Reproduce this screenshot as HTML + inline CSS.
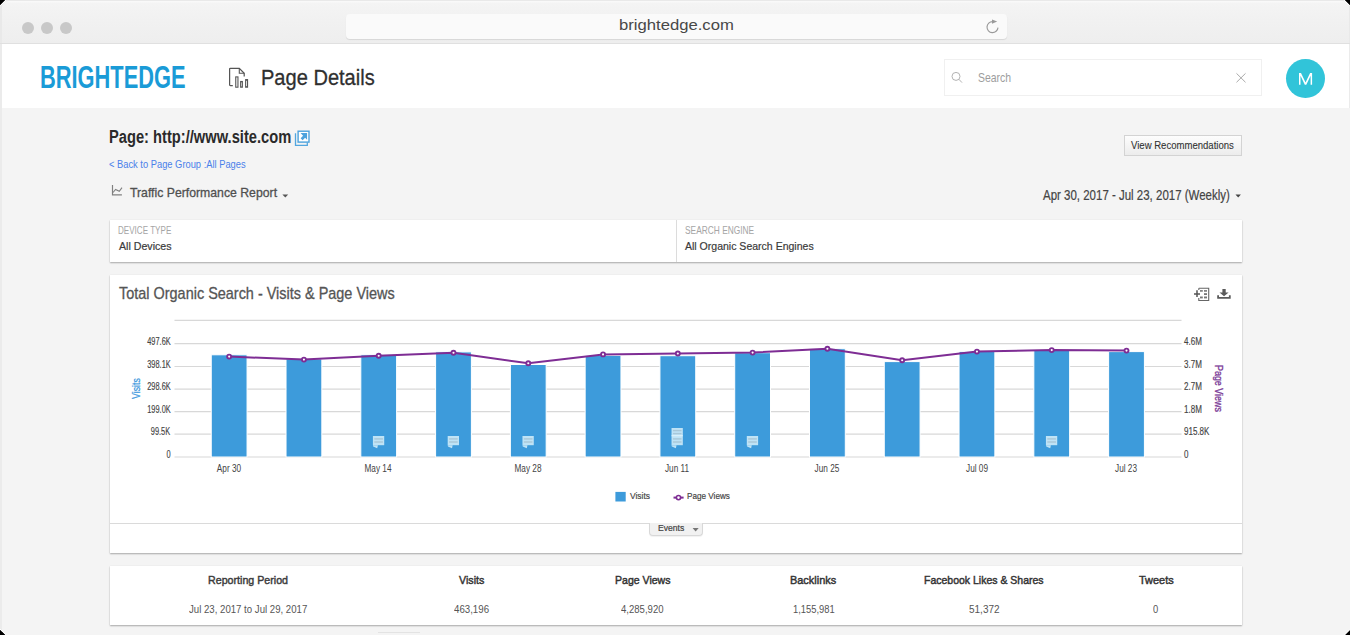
<!DOCTYPE html>
<html><head><meta charset="utf-8"><style>
html,body{margin:0;padding:0;width:1350px;height:635px;overflow:hidden;background:#000}
#win{position:absolute;left:0;top:0;width:1350px;height:635px;overflow:hidden;background:#f4f4f4;clip-path:polygon(5.5px 0,1344.5px 0,1350px 5.5px,1350px 630px,1345px 635px,5.5px 635px,0 629.5px,0 5.5px)}
.t{position:absolute;white-space:nowrap;font-family:"Liberation Sans",sans-serif;line-height:1;transform-origin:0 0}
.a{position:absolute}
</style></head><body><div id="win">
<div class="a" style="left:0;top:0;width:1350px;height:44px;background:#e9e9e9"></div><div class="a" style="left:1.5px;top:1px;width:1347px;height:43px;border-radius:6px 6px 0 0;background:linear-gradient(#fafafa 0,#f4f4f4 2.5px,#f1f1f1 20px,#eeeeee 42px)"></div>
<div class="a" style="left:0;top:42.5px;width:1350px;height:1.5px;background:#e0e0e0"></div>
<div class="a" style="left:21.8px;top:21.8px;width:12.2px;height:12.2px;border-radius:50%;background:#c8c8c8"></div>
<div class="a" style="left:41px;top:21.8px;width:12.2px;height:12.2px;border-radius:50%;background:#c8c8c8"></div>
<div class="a" style="left:60.2px;top:21.8px;width:12.2px;height:12.2px;border-radius:50%;background:#c8c8c8"></div>
<div class="a" style="left:345.5px;top:13.5px;width:661px;height:25px;border-radius:4px;background:#fafafa;box-shadow:0 1px 1px rgba(0,0,0,.10)"></div>
<svg class="a" style="left:984px;top:18px" width="18" height="18" viewBox="0 0 18 18"><path d="M8.6 3.6 A5.5 5.5 0 1 0 14 9.6" fill="none" stroke="#9a9a9a" stroke-width="1.15"/><path d="M8 1.4 L13.2 3.6 L8 5.8 Z" fill="#9a9a9a"/></svg>
<div class="a" style="left:0;top:44px;width:1350px;height:64px;background:#fff"></div>
<div class="a" style="left:0;top:44px;width:1.5px;height:591px;background:#ebebeb"></div>
<div class="a" style="left:1348.5px;top:44px;width:1.5px;height:64px;background:#ebebeb"></div>
<svg class="a" style="left:220px;top:60px" width="40" height="35" viewBox="0 0 40 35"><path d="M12.8 25.6 H10.4 Q9.6 25.6 9.6 24.8 V9 Q9.6 8.3 10.4 8.3 H19.3 L24.2 13.2 V16.5" fill="none" stroke="#555" stroke-width="1.25"/><path d="M19.3 8.3 V13.2 H24.2" fill="none" stroke="#555" stroke-width="1.1"/><rect x="15.75" y="16.9" width="2.2" height="10.3" fill="none" stroke="#555" stroke-width="1.1"/><rect x="20.65" y="21.5" width="1.7" height="5.7" fill="none" stroke="#555" stroke-width="1.1"/><rect x="25.65" y="19.6" width="1.9" height="7.6" fill="none" stroke="#555" stroke-width="1.1"/></svg>
<div class="a" style="left:944px;top:59px;width:315.5px;height:34.5px;border:1px solid #f0f0f0;background:#fff"></div>
<svg class="a" style="left:948px;top:68px" width="20" height="20" viewBox="0 0 20 20"><circle cx="8" cy="8.4" r="4" fill="none" stroke="#b3b3b3" stroke-width="1"/><path d="M10.9 11.3 L14 14.6" stroke="#b3b3b3" stroke-width="1"/></svg>
<svg class="a" style="left:1234px;top:71px" width="14" height="14" viewBox="0 0 14 14"><path d="M2.5 2.4 L11.5 11.3 M11.5 2.4 L2.5 11.3" stroke="#a5a5a5" stroke-width="0.95"/></svg>
<div class="a" style="left:1286px;top:59.2px;width:38.8px;height:38.8px;border-radius:50%;background:#31c4d9"></div><svg class="a" style="left:1290px;top:65px" width="30" height="27"><path d="M9 19.8 V8.1 H11 L15.55 17.6 L20.1 8.1 H22.1 V19.8 H20.6 V10.8 L16.3 19.8 H14.8 L10.5 10.8 V19.8 Z" fill="#fff"/></svg>
<svg class="a" style="left:290px;top:125px" width="25" height="25" viewBox="0 0 25 25"><path d="M5.5 8.3 V20.3 H17.3 V17.6" fill="none" stroke="#52a6df" stroke-width="1.3"/><rect x="8.1" y="6.2" width="10.9" height="10.9" fill="#fff" stroke="#4ca2dd" stroke-width="1.4"/><path d="M10.5 8.1 H17.1 V14.7 L15.1 12.7 L12.6 15.2 L10.6 13.2 L13.1 10.7 Z" fill="#4ca2dd"/></svg>
<svg class="a" style="left:108px;top:182px" width="20" height="18" viewBox="0 0 20 18"><path d="M4.5 3.1 V12.9 H13.9" fill="none" stroke="#808080" stroke-width="1.2"/><path d="M5 10.5 L7.6 7.4 L11.3 9.3 L14 5.7" fill="none" stroke="#808080" stroke-width="1.1"/></svg>
<svg class="a" style="left:280px;top:192px" width="10" height="8" viewBox="0 0 10 8"><path d="M2.4 2.4 H8.2 L5.3 5.4 Z" fill="#555"/></svg>
<div class="a" style="left:1124px;top:135.3px;width:116px;height:18.5px;border:1px solid #d3d3d3;background:linear-gradient(#fdfdfd,#ececec)"></div>
<svg class="a" style="left:1232px;top:191px" width="10" height="8" viewBox="0 0 10 8"><path d="M3.5 3.6 H8.9 L6.2 6.6 Z" fill="#444"/></svg>
<div class="a" style="left:110px;top:220px;width:1132px;height:42px;background:#fff;box-shadow:0 1px 1.5px rgba(0,0,0,.30),0 0 1px rgba(0,0,0,.08)"></div>
<div class="a" style="left:676px;top:220px;width:1px;height:42px;background:#dcdcdc"></div>
<div class="a" style="left:110px;top:275px;width:1132px;height:278px;background:#fff;box-shadow:0 1px 1.5px rgba(0,0,0,.30),0 0 1px rgba(0,0,0,.08)"></div>
<svg class="a" style="left:1190px;top:283px" width="45" height="22" viewBox="0 0 45 22"><path d="M8.8 5.2 H18.7 V17.5 H8.8 V15" fill="none" stroke="#666" stroke-width="1.1"/><path d="M8.8 5.2 V7" stroke="#666" stroke-width="1.1"/><rect x="10" y="7.1" width="2.8" height="1.6" fill="#777"/><rect x="14" y="7.1" width="3" height="1.6" fill="#777"/><rect x="14" y="10.2" width="3" height="1.8" fill="#777"/><rect x="10" y="13.5" width="2.8" height="1.9" fill="#777"/><rect x="14" y="13.5" width="3" height="1.9" fill="#777"/><path d="M4 10.9 H10 M7 7.3 V13.9" stroke="#555" stroke-width="1.5"/><path d="M32.4 6 H35.7 V9.4 H38.6 L34.05 13.3 L29.5 9.4 H32.4 Z" fill="#5a5a5a"/><path d="M28.1 12.2 V14.9 H39.8 V12.2" fill="none" stroke="#5a5a5a" stroke-width="1.8"/></svg>
<svg width="1350" height="635" style="position:absolute;left:0;top:0"><line x1="174.5" x2="1181.5" y1="320.4" y2="320.4" stroke="#d8d8d8" stroke-width="1.2"/><line x1="174.5" x2="1181.5" y1="343.6" y2="343.6" stroke="#d8d8d8" stroke-width="1.2"/><line x1="174.5" x2="1181.5" y1="366.5" y2="366.5" stroke="#d8d8d8" stroke-width="1.2"/><line x1="174.5" x2="1181.5" y1="389.2" y2="389.2" stroke="#d8d8d8" stroke-width="1.2"/><line x1="174.5" x2="1181.5" y1="411.6" y2="411.6" stroke="#d8d8d8" stroke-width="1.2"/><line x1="174.5" x2="1181.5" y1="434.2" y2="434.2" stroke="#d8d8d8" stroke-width="1.2"/><line x1="174.5" x2="1181.5" y1="457.0" y2="457.0" stroke="#d8d8d8" stroke-width="1.2"/><rect x="211.25" y="354.80" width="35.8" height="102.20" fill="#3d9bdb" stroke="#fff" stroke-width="1"/><rect x="286.03" y="358.90" width="35.8" height="98.10" fill="#3d9bdb" stroke="#fff" stroke-width="1"/><rect x="360.81" y="354.80" width="35.8" height="102.20" fill="#3d9bdb" stroke="#fff" stroke-width="1"/><rect x="435.59" y="351.90" width="35.8" height="105.10" fill="#3d9bdb" stroke="#fff" stroke-width="1"/><rect x="510.37" y="364.50" width="35.8" height="92.50" fill="#3d9bdb" stroke="#fff" stroke-width="1"/><rect x="585.15" y="355.40" width="35.8" height="101.60" fill="#3d9bdb" stroke="#fff" stroke-width="1"/><rect x="659.93" y="355.70" width="35.8" height="101.30" fill="#3d9bdb" stroke="#fff" stroke-width="1"/><rect x="734.71" y="352.70" width="35.8" height="104.30" fill="#3d9bdb" stroke="#fff" stroke-width="1"/><rect x="809.49" y="348.70" width="35.8" height="108.30" fill="#3d9bdb" stroke="#fff" stroke-width="1"/><rect x="884.27" y="361.60" width="35.8" height="95.40" fill="#3d9bdb" stroke="#fff" stroke-width="1"/><rect x="959.05" y="351.40" width="35.8" height="105.60" fill="#3d9bdb" stroke="#fff" stroke-width="1"/><rect x="1033.83" y="350.20" width="35.8" height="106.80" fill="#3d9bdb" stroke="#fff" stroke-width="1"/><rect x="1108.61" y="351.60" width="35.8" height="105.40" fill="#3d9bdb" stroke="#fff" stroke-width="1"/><rect x="372.91" y="436" width="11.3" height="9.2" fill="#bfe3f6"/><path d="M372.91 445.2 L373.21 446.4 L377.21 448.3 L377.91 445.2 Z" fill="#bfe3f6"/><rect x="374.31" y="438.2" width="8.6" height="1.4" fill="#a8c7d8"/><rect x="374.31" y="441.3" width="8.6" height="1.4" fill="#a8c7d8"/><rect x="447.69" y="436" width="11.3" height="9.2" fill="#bfe3f6"/><path d="M447.69 445.2 L447.99 446.4 L451.99 448.3 L452.69 445.2 Z" fill="#bfe3f6"/><rect x="449.09" y="438.2" width="8.6" height="1.4" fill="#a8c7d8"/><rect x="449.09" y="441.3" width="8.6" height="1.4" fill="#a8c7d8"/><rect x="522.47" y="436" width="11.3" height="9.2" fill="#bfe3f6"/><path d="M522.47 445.2 L522.77 446.4 L526.77 448.3 L527.47 445.2 Z" fill="#bfe3f6"/><rect x="523.87" y="438.2" width="8.6" height="1.4" fill="#a8c7d8"/><rect x="523.87" y="441.3" width="8.6" height="1.4" fill="#a8c7d8"/><rect x="746.81" y="436" width="11.3" height="9.2" fill="#bfe3f6"/><path d="M746.81 445.2 L747.11 446.4 L751.11 448.3 L751.81 445.2 Z" fill="#bfe3f6"/><rect x="748.21" y="438.2" width="8.6" height="1.4" fill="#a8c7d8"/><rect x="748.21" y="441.3" width="8.6" height="1.4" fill="#a8c7d8"/><rect x="1045.93" y="436" width="11.3" height="9.2" fill="#bfe3f6"/><path d="M1045.93 445.2 L1046.23 446.4 L1050.23 448.3 L1050.93 445.2 Z" fill="#bfe3f6"/><rect x="1047.33" y="438.2" width="8.6" height="1.4" fill="#a8c7d8"/><rect x="1047.33" y="441.3" width="8.6" height="1.4" fill="#a8c7d8"/><rect x="671.53" y="428" width="11.3" height="8" fill="#bfe3f6"/><rect x="672.93" y="429.9" width="8.6" height="1.4" fill="#a8c7d8"/><rect x="672.93" y="432.9" width="8.6" height="1.4" fill="#a8c7d8"/><rect x="671.53" y="436" width="11.3" height="9.2" fill="#bfe3f6"/><path d="M671.53 445.2 L671.83 446.4 L675.83 448.3 L676.53 445.2 Z" fill="#bfe3f6"/><rect x="672.93" y="438.2" width="8.6" height="1.4" fill="#a8c7d8"/><rect x="672.93" y="441.3" width="8.6" height="1.4" fill="#a8c7d8"/><rect x="671.53" y="435.3" width="11.3" height="0.9" fill="#e6f5fc"/><polyline points="229.15,356.60 303.93,359.60 378.71,355.80 453.49,352.70 528.27,363.30 603.05,354.40 677.83,353.50 752.61,352.60 827.39,348.80 902.17,360.20 976.95,351.60 1051.73,350.10 1126.51,350.60" fill="none" stroke="#7e2d94" stroke-width="2"/><circle cx="229.15" cy="356.60" r="2.0" fill="#fff" stroke="#7e2d94" stroke-width="1.9"/><circle cx="303.93" cy="359.60" r="2.0" fill="#fff" stroke="#7e2d94" stroke-width="1.9"/><circle cx="378.71" cy="355.80" r="2.0" fill="#fff" stroke="#7e2d94" stroke-width="1.9"/><circle cx="453.49" cy="352.70" r="2.0" fill="#fff" stroke="#7e2d94" stroke-width="1.9"/><circle cx="528.27" cy="363.30" r="2.0" fill="#fff" stroke="#7e2d94" stroke-width="1.9"/><circle cx="603.05" cy="354.40" r="2.0" fill="#fff" stroke="#7e2d94" stroke-width="1.9"/><circle cx="677.83" cy="353.50" r="2.0" fill="#fff" stroke="#7e2d94" stroke-width="1.9"/><circle cx="752.61" cy="352.60" r="2.0" fill="#fff" stroke="#7e2d94" stroke-width="1.9"/><circle cx="827.39" cy="348.80" r="2.0" fill="#fff" stroke="#7e2d94" stroke-width="1.9"/><circle cx="902.17" cy="360.20" r="2.0" fill="#fff" stroke="#7e2d94" stroke-width="1.9"/><circle cx="976.95" cy="351.60" r="2.0" fill="#fff" stroke="#7e2d94" stroke-width="1.9"/><circle cx="1051.73" cy="350.10" r="2.0" fill="#fff" stroke="#7e2d94" stroke-width="1.9"/><circle cx="1126.51" cy="350.60" r="2.0" fill="#fff" stroke="#7e2d94" stroke-width="1.9"/><rect x="615.4" y="491.9" width="10.3" height="9.6" fill="#3d9bdb"/><line x1="673.5" x2="683.6" y1="497.6" y2="497.6" stroke="#7e2d94" stroke-width="2"/><circle cx="678.5" cy="497.6" r="2.1" fill="#fff" stroke="#7e2d94" stroke-width="1.6"/></svg>
<div class="a" style="left:110px;top:523px;width:1132px;height:1px;background:#dadada"></div>
<div class="a" style="left:649.3px;top:523px;width:51.5px;height:12.3px;border:1px solid #d8d8d8;border-top:0;border-radius:0 0 4px 4px;background:#f1f1f1;box-shadow:0 1px 1px rgba(0,0,0,.06)"></div>
<svg class="a" style="left:690px;top:526px" width="10" height="8" viewBox="0 0 10 8"><path d="M2.6 2 H8.7 L5.65 5.4 Z" fill="#777"/></svg>
<div class="a" style="left:110px;top:566px;width:1132px;height:59px;background:#fff;box-shadow:0 1px 1.5px rgba(0,0,0,.30),0 0 1px rgba(0,0,0,.08)"></div>
<div class="a" style="left:378px;top:632px;width:42px;height:1px;background:#e3e3e3"></div>
<div class="t" style="left:618.73px;top:16.65px;font-size:15.55px;font-weight:400;color:#484848;transform:scaleX(1.0712)">brightedge.com</div><div class="t" style="left:40.47px;top:62.09px;font-size:31.40px;font-weight:700;color:#1a9bd7;transform:scaleX(0.6952)">BRIGHTEDGE</div><div class="t" style="left:261.30px;top:67.16px;font-size:21.88px;font-weight:400;color:#2f2f2f;transform:scaleX(0.9166);-webkit-text-stroke:0.3px #2f2f2f">Page Details</div><div class="t" style="left:977.78px;top:72.33px;font-size:12.11px;font-weight:400;color:#9d9d9d;transform:scaleX(0.8610)">Search</div><div class="t" style="left:109.37px;top:128.90px;font-size:17.48px;font-weight:700;color:#2a2a2a;transform:scaleX(0.8406)">Page: http://www.site.com</div><div class="t" style="left:109.23px;top:158.59px;font-size:11.15px;font-weight:400;color:#4a80ea;transform:scaleX(0.8374)">&lt; Back to Page Group :All Pages</div><div class="t" style="left:130.06px;top:186.65px;font-size:12.94px;font-weight:400;color:#505050;transform:scaleX(0.9467);-webkit-text-stroke:0.3px #505050">Traffic Performance Report</div><div class="t" style="left:1131.40px;top:139.24px;font-size:11.70px;font-weight:400;color:#333333;transform:scaleX(0.8175);-webkit-text-stroke:0.1px #333333">View Recommendations</div><div class="t" style="left:1043.30px;top:188.64px;font-size:13.76px;font-weight:400;color:#444444;transform:scaleX(0.8352);-webkit-text-stroke:0.2px #444444">Apr 30, 2017 - Jul 23, 2017 (Weekly)</div><div class="t" style="left:118.05px;top:226.18px;font-size:10.48px;font-weight:400;color:#a5a5a5;transform:scaleX(0.7715)">DEVICE TYPE</div><div class="t" style="left:118.50px;top:240.96px;font-size:11.28px;font-weight:400;color:#3a3a3a;transform:scaleX(0.9440);-webkit-text-stroke:0.2px #3a3a3a">All Devices</div><div class="t" style="left:684.98px;top:226.31px;font-size:10.48px;font-weight:400;color:#a5a5a5;transform:scaleX(0.7982)">SEARCH ENGINE</div><div class="t" style="left:685.40px;top:240.90px;font-size:11.83px;font-weight:400;color:#3a3a3a;transform:scaleX(0.8894);-webkit-text-stroke:0.2px #3a3a3a">All Organic Search Engines</div><div class="t" style="left:118.51px;top:285.88px;font-size:15.96px;font-weight:400;color:#555555;transform:scaleX(0.9056);-webkit-text-stroke:0.3px #555555">Total Organic Search - Visits &amp; Page Views</div><div class="t" style="left:629.52px;top:490.61px;font-size:9.91px;font-weight:400;color:#444444;transform:scaleX(0.8483);-webkit-text-stroke:0.2px #444444">Visits</div><div class="t" style="left:687.35px;top:490.61px;font-size:9.91px;font-weight:400;color:#444444;transform:scaleX(0.8231);-webkit-text-stroke:0.2px #444444">Page Views</div><div class="t" style="left:658.41px;top:524.40px;font-size:8.74px;font-weight:400;color:#444444;transform:scaleX(0.9810);-webkit-text-stroke:0.2px #444444">Events</div><div class="t" style="left:208.05px;top:575.03px;font-size:11.42px;font-weight:400;color:#3b3b3b;transform:scaleX(0.9350);-webkit-text-stroke:0.45px #3b3b3b">Reporting Period</div><div class="t" style="left:459.49px;top:574.93px;font-size:11.42px;font-weight:400;color:#333333;transform:scaleX(0.9359);-webkit-text-stroke:0.45px #333333">Visits</div><div class="t" style="left:614.75px;top:575.03px;font-size:11.42px;font-weight:400;color:#333333;transform:scaleX(0.9248);-webkit-text-stroke:0.45px #333333">Page Views</div><div class="t" style="left:790.42px;top:575.03px;font-size:11.42px;font-weight:400;color:#333333;transform:scaleX(0.9586);-webkit-text-stroke:0.45px #333333">Backlinks</div><div class="t" style="left:924.36px;top:575.03px;font-size:11.42px;font-weight:400;color:#333333;transform:scaleX(0.9198);-webkit-text-stroke:0.45px #333333">Facebook Likes &amp; Shares</div><div class="t" style="left:1138.88px;top:574.87px;font-size:11.42px;font-weight:400;color:#333333;transform:scaleX(0.9601);-webkit-text-stroke:0.45px #333333">Tweets</div><div class="t" style="left:188.81px;top:603.96px;font-size:11.28px;font-weight:400;color:#555555;transform:scaleX(0.8543)">Jul 23, 2017 to Jul 29, 2017</div><div class="t" style="left:454.41px;top:603.48px;font-size:11.77px;font-weight:400;color:#555555;transform:scaleX(0.8233)">463,196</div><div class="t" style="left:621.41px;top:602.51px;font-size:11.77px;font-weight:400;color:#555555;transform:scaleX(0.8129)">4,285,920</div><div class="t" style="left:792.55px;top:602.53px;font-size:11.77px;font-weight:400;color:#555555;transform:scaleX(0.7985)">1,155,981</div><div class="t" style="left:969.20px;top:602.55px;font-size:11.77px;font-weight:400;color:#555555;transform:scaleX(0.8496)">51,372</div><div class="t" style="left:1153.12px;top:602.63px;font-size:11.77px;font-weight:400;color:#555555;transform:scaleX(0.7965)">0</div>
<div class="t" style="right:1179.40px;top:336.63px;font-size:10.00px;color:#444;-webkit-text-stroke:0.15px #444;transform:scaleX(0.7412);transform-origin:100% 0">497.6K</div><div class="t" style="right:1179.40px;top:359.53px;font-size:10.00px;color:#444;-webkit-text-stroke:0.15px #444;transform:scaleX(0.7412);transform-origin:100% 0">398.1K</div><div class="t" style="right:1179.40px;top:382.23px;font-size:10.00px;color:#444;-webkit-text-stroke:0.15px #444;transform:scaleX(0.7412);transform-origin:100% 0">298.6K</div><div class="t" style="right:1179.40px;top:404.63px;font-size:10.00px;color:#444;-webkit-text-stroke:0.15px #444;transform:scaleX(0.7412);transform-origin:100% 0">199.0K</div><div class="t" style="right:1179.40px;top:427.23px;font-size:10.00px;color:#444;-webkit-text-stroke:0.15px #444;transform:scaleX(0.7412);transform-origin:100% 0">99.5K</div><div class="t" style="right:1179.40px;top:450.03px;font-size:10.00px;color:#444;-webkit-text-stroke:0.15px #444;transform:scaleX(0.7412);transform-origin:100% 0">0</div><div class="t" style="left:1183.94px;top:336.63px;font-size:10.00px;color:#444;-webkit-text-stroke:0.15px #444;transform:scaleX(0.8028)">4.6M</div><div class="t" style="left:1183.94px;top:359.53px;font-size:10.00px;color:#444;-webkit-text-stroke:0.15px #444;transform:scaleX(0.8028)">3.7M</div><div class="t" style="left:1183.94px;top:382.23px;font-size:10.00px;color:#444;-webkit-text-stroke:0.15px #444;transform:scaleX(0.8028)">2.7M</div><div class="t" style="left:1183.94px;top:404.63px;font-size:10.00px;color:#444;-webkit-text-stroke:0.15px #444;transform:scaleX(0.8028)">1.8M</div><div class="t" style="left:1183.94px;top:427.23px;font-size:10.00px;color:#444;-webkit-text-stroke:0.15px #444;transform:scaleX(0.8028)">915.8K</div><div class="t" style="left:1183.94px;top:450.03px;font-size:10.00px;color:#444;-webkit-text-stroke:0.15px #444;transform:scaleX(0.8028)">0</div><div class="t" style="left:128.80px;width:200px;text-align:center;top:462.61px;font-size:10.62px;color:#444;transform:scaleX(0.7765);transform-origin:50% 0">Apr 30</div><div class="t" style="left:278.40px;width:200px;text-align:center;top:462.61px;font-size:10.62px;color:#444;transform:scaleX(0.7765);transform-origin:50% 0">May 14</div><div class="t" style="left:428.30px;width:200px;text-align:center;top:462.61px;font-size:10.62px;color:#444;transform:scaleX(0.7765);transform-origin:50% 0">May 28</div><div class="t" style="left:576.80px;width:200px;text-align:center;top:462.61px;font-size:10.62px;color:#444;transform:scaleX(0.7765);transform-origin:50% 0">Jun 11</div><div class="t" style="left:727.10px;width:200px;text-align:center;top:462.61px;font-size:10.62px;color:#444;transform:scaleX(0.7765);transform-origin:50% 0">Jun 25</div><div class="t" style="left:876.60px;width:200px;text-align:center;top:462.61px;font-size:10.62px;color:#444;transform:scaleX(0.7765);transform-origin:50% 0">Jul 09</div><div class="t" style="left:1026.00px;width:200px;text-align:center;top:462.61px;font-size:10.62px;color:#444;transform:scaleX(0.7765);transform-origin:50% 0">Jul 23</div>
<div class="t" style="left:131.2px;top:399px;font-size:11px;color:#3b97dd;-webkit-text-stroke:0.25px #3b97dd;transform:rotate(-90deg) scaleX(0.8);transform-origin:0 0">Visits</div>
<div class="t" style="left:1224px;top:365px;font-size:11px;font-weight:400;color:#7d3c98;-webkit-text-stroke:0.35px #7d3c98;transform:rotate(90deg) scaleX(0.81);transform-origin:0 0">Page Views</div>
<svg class="a" style="left:0;top:0" width="1350" height="635"><path d="M0 6 L6 0 M1344 0 L1350 6 M0 629 L6 635 M1344.5 635 L1350 629.5" stroke="#fff" stroke-width="1"/></svg>
</div></body></html>
